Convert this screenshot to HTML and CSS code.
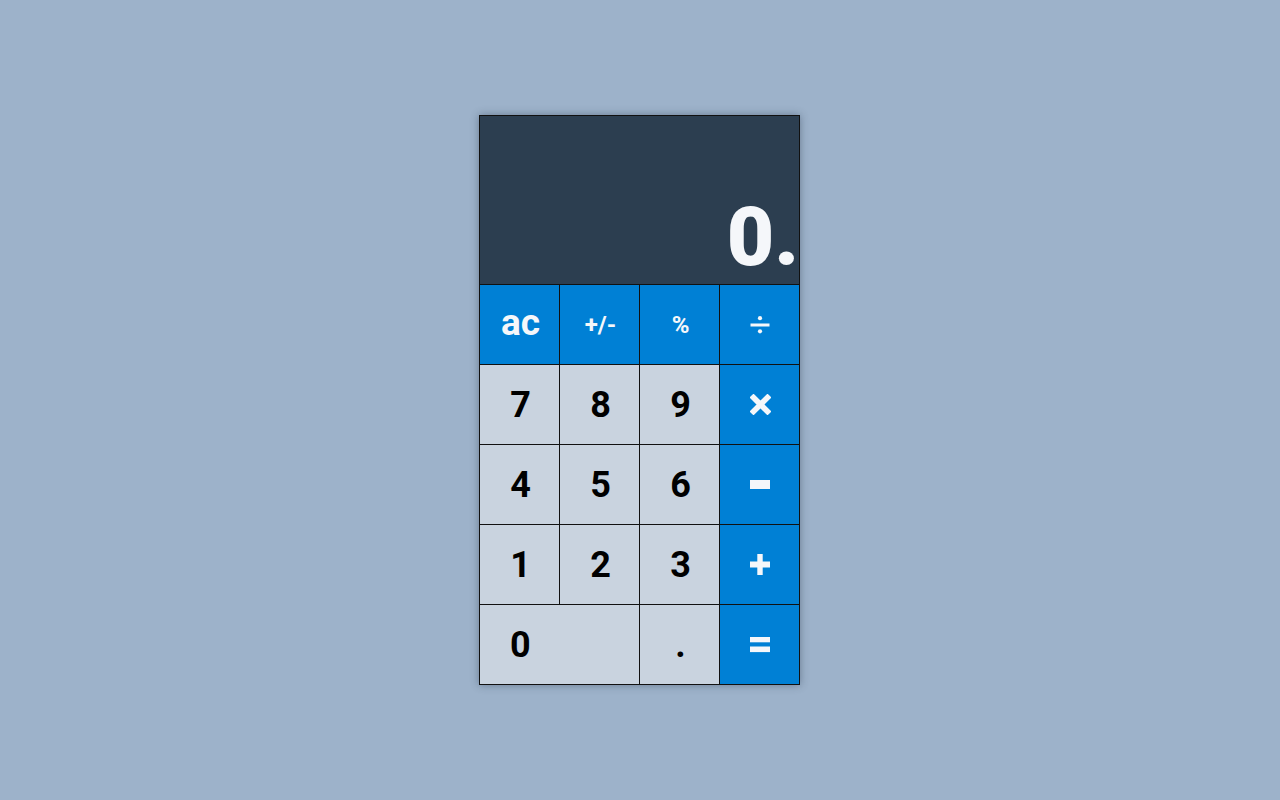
FILE: index.html
```html
<!DOCTYPE html>
<html>
<head>
<meta charset="utf-8">
<link rel="stylesheet" href="styles.css">
</head>
<body>
<div class="calc">
  <div class="display"><span class="value">0.</span></div>
  <div class="keys">
    <div class="key op ac">ac</div>
    <div class="key op small">+/-</div>
    <div class="key op small">%</div>
    <div class="key op icon" title="÷">
      <svg width="20" height="18" viewBox="0 0 20 18"><circle cx="10" cy="2.2" r="2.1" fill="#f5f7fa"/><rect x="0.5" y="7.5" width="19" height="3" fill="#f5f7fa"/><circle cx="10" cy="15.3" r="2.1" fill="#f5f7fa"/></svg>
    </div>
    <div class="key num">7</div>
    <div class="key num">8</div>
    <div class="key num">9</div>
    <div class="key op icon" title="×">
      <svg width="21" height="21" viewBox="0 0 21 21"><path d="M3.5 3.5 L17.5 17.5 M17.5 3.5 L3.5 17.5" stroke="#f5f7fa" stroke-width="5.5" stroke-linecap="square"/></svg>
    </div>
    <div class="key num">4</div>
    <div class="key num">5</div>
    <div class="key num">6</div>
    <div class="key op icon" title="−">
      <svg width="20" height="9" viewBox="0 0 20 9"><rect x="0" y="0" width="20" height="9" fill="#f5f7fa"/></svg>
    </div>
    <div class="key num">1</div>
    <div class="key num">2</div>
    <div class="key num">3</div>
    <div class="key op icon" title="+">
      <svg width="20" height="21" viewBox="0 0 20 21"><rect x="7.3" y="0" width="5.4" height="21" fill="#f5f7fa"/><rect x="0" y="7.5" width="20" height="6" fill="#f5f7fa"/></svg>
    </div>
    <div class="key num zero">0</div>
    <div class="key num">.</div>
    <div class="key op icon" title="=">
      <svg width="20" height="16" viewBox="0 0 20 16"><rect x="0" y="0" width="20" height="5.3" fill="#f5f7fa"/><rect x="0" y="9.5" width="20" height="5.6" fill="#f5f7fa"/></svg>
    </div>
  </div>
</div>
</body>
</html>
```
FILE: styles.css
```css
html, body {
  margin: 0;
  height: 100%;
}
body {
  background: #9db2ca;
  font-family: Roboto, "Liberation Sans", sans-serif;
  display: flex;
  align-items: center;
  justify-content: center;
}
.calc {
  width: 320px;
  border-left: 1px solid #111;
  border-top: 1px solid #111;
  box-shadow: 0 0 8px rgba(40, 55, 75, 0.45);
  margin-left: -1px;
}
.display {
  height: 168px;
  background: #2c3e50;
  border-right: 1px solid #111;
  border-bottom: 1px solid #111;
  display: flex;
  align-items: flex-end;
  justify-content: flex-end;
  padding-right: 0;
  box-sizing: content-box;
  width: 319px;
}
.value {
  color: #f5f7fa;
  font-size: 82px;
  font-weight: 900;
  line-height: 1;
  margin-bottom: 6px;
  margin-right: 0;
}
.keys {
  display: grid;
  grid-template-columns: repeat(4, 80px);
  grid-auto-rows: 80px;
}
.key {
  border-right: 1px solid #111;
  border-bottom: 1px solid #111;
  display: flex;
  align-items: center;
  justify-content: center;
  font-weight: 700;
  font-size: 36px;
  box-sizing: border-box;
  padding-left: 2px;
}
.key.num {
  background: #c9d3df;
  color: #000;
}
.key.op {
  background: #0080d5;
  color: #f5f7fa;
}
.key.small {
  font-size: 24px;
}
.key.ac {
  font-size: 37px;
  padding-bottom: 4px;
}
.key.icon {
  padding-left: 1px;
}
.key.zero {
  grid-column: span 2;
  justify-content: flex-start;
  padding-left: 30px;
}
```
